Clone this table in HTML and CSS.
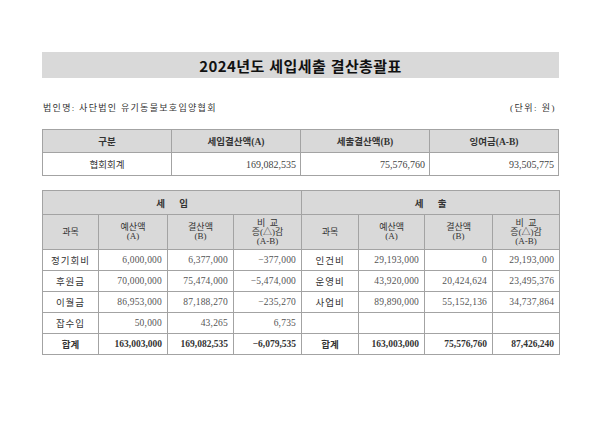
FILE: index.html
```html
<!DOCTYPE html>
<html lang="ko">
<head>
<meta charset="utf-8">
<title>2024년도 세입세출 결산총괄표</title>
<link rel="stylesheet" href="styles.css">
</head>
<body>
<div class="page">
  <div class="title">2024년도 세입세출 결산총괄표</div>
  <div class="meta">
    <span class="org">법인명: 사단법인 유기동물보호입양협회</span>
    <span class="unit">(단위: 원)</span>
  </div>
  <table class="summary">
    <thead>
      <tr><th>구분</th><th>세입결산액(A)</th><th>세출결산액(B)</th><th>잉여금(A-B)</th></tr>
    </thead>
    <tbody>
      <tr><td class="label">협회회계</td><td class="num">169,082,535</td><td class="num">75,576,760</td><td class="num">93,505,775</td></tr>
    </tbody>
  </table>
  <table class="detail">
    <colgroup>
      <col style="width:56px"><col style="width:69px"><col style="width:66px"><col style="width:68px">
      <col style="width:57px"><col style="width:66px"><col style="width:68px"><col style="width:67px">
    </colgroup>
    <thead>
      <tr class="group"><th colspan="4">세&nbsp;&nbsp;&nbsp;&nbsp;&nbsp;&nbsp;입</th><th colspan="4">세&nbsp;&nbsp;&nbsp;&nbsp;&nbsp;&nbsp;출</th></tr>
      <tr class="sub">
        <th>과목</th><th>예산액<br>(A)</th><th>결산액<br>(B)</th><th>비&nbsp;&nbsp;교<br>증(△)감<br>(A-B)</th>
        <th>과목</th><th>예산액<br>(A)</th><th>결산액<br>(B)</th><th>비&nbsp;&nbsp;교<br>증(△)감<br>(A-B)</th>
      </tr>
    </thead>
    <tbody>
      <tr><td class="label">정기회비</td><td class="num">6,000,000</td><td class="num">6,377,000</td><td class="num">−377,000</td>
          <td class="label">인건비</td><td class="num">29,193,000</td><td class="num">0</td><td class="num">29,193,000</td></tr>
      <tr><td class="label">후원금</td><td class="num">70,000,000</td><td class="num">75,474,000</td><td class="num">−5,474,000</td>
          <td class="label">운영비</td><td class="num">43,920,000</td><td class="num">20,424,624</td><td class="num">23,495,376</td></tr>
      <tr><td class="label">이월금</td><td class="num">86,953,000</td><td class="num">87,188,270</td><td class="num">−235,270</td>
          <td class="label">사업비</td><td class="num">89,890,000</td><td class="num">55,152,136</td><td class="num">34,737,864</td></tr>
      <tr><td class="label">잡수입</td><td class="num">50,000</td><td class="num">43,265</td><td class="num">6,735</td>
          <td class="label"></td><td class="num"></td><td class="num"></td><td class="num"></td></tr>
      <tr class="total"><td class="label">합계</td><td class="num">163,003,000</td><td class="num">169,082,535</td><td class="num">−6,079,535</td>
          <td class="label">합계</td><td class="num">163,003,000</td><td class="num">75,576,760</td><td class="num">87,426,240</td></tr>
    </tbody>
  </table>
</div>
</body>
</html>
```

FILE: styles.css
```css
html, body {
  margin: 0;
  padding: 0;
  background: #ffffff;
}

.page {
  width: 517px;
  padding: 52px 0 0 42px;
  font-family: "Liberation Serif", "Noto Sans CJK KR", serif;
  color: #333;
}

.title {
  height: 26px;
  background: #d9d9d9;
  display: flex;
  align-items: center;
  justify-content: center;
  font-family: "Noto Sans CJK KR", sans-serif;
  font-weight: 700;
  font-size: 15px;
  color: #111;
  letter-spacing: 0.4px;
}

.meta {
  display: flex;
  justify-content: space-between;
  align-items: center;
  height: 14px;
  margin-top: 22px;
  font-size: 9px;
  color: #333;
}

.meta .org {
  letter-spacing: 1.3px;
  padding-left: 1px;
}

.meta .unit {
  padding-right: 3px;
  letter-spacing: 1.5px;
}

table {
  width: 517px;
  border-collapse: collapse;
  table-layout: fixed;
}

th, td {
  border: 1px solid #a3a3a3;
  padding: 0;
}

.summary {
  margin-top: 15px;
}

.summary th {
  height: 22px;
  background: #d9d9d9;
  font-size: 9.5px;
  font-weight: 700;
  color: #333;
}

.summary td {
  height: 22px;
  font-size: 10px;
}

.summary td.label {
  text-align: center;
  font-size: 9.5px;
}

.summary td.num {
  text-align: right;
  padding-right: 4px;
  color: #444;
}

.detail {
  margin-top: 14px;
}

.detail th {
  background: #d9d9d9;
  font-weight: 400;
  color: #333;
  font-size: 9px;
}

.detail .group th {
  height: 23px;
  font-weight: 700;
  font-size: 9.5px;
}

.detail .sub th {
  height: 34px;
  line-height: 9px;
}

.detail td {
  height: 20px;
  font-size: 9.5px;
}

.detail td.label {
  text-align: center;
  letter-spacing: 1px;
}

.detail td.num {
  text-align: right;
  padding-right: 5px;
  color: #555;
  letter-spacing: 0.2px;
}

.detail .total td {
  font-weight: 700;
  color: #333;
  letter-spacing: 0;
}
```
